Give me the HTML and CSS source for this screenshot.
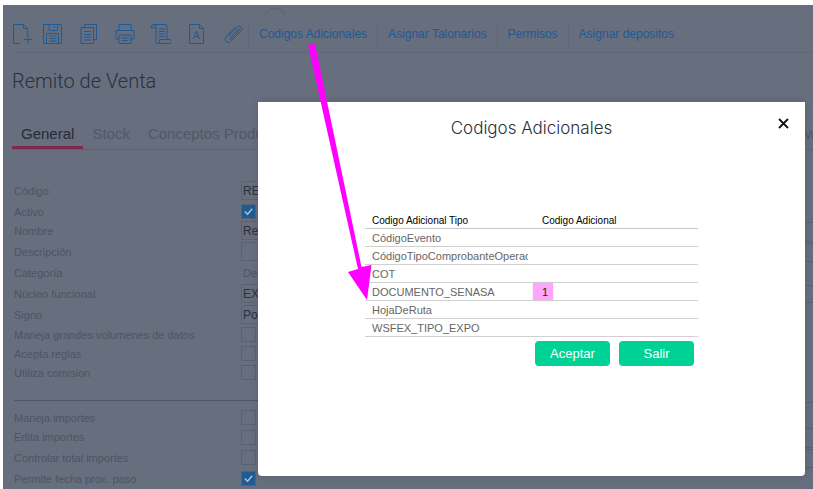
FILE: index.html
```html
<!DOCTYPE html>
<html lang="es">
<head>
<meta charset="utf-8">
<title>Remito de Venta</title>
<link rel="stylesheet" href="styles.css">
</head>
<body>
<div class="app">
  <span class="arc"></span>
  <header class="toolbar">
    <div class="tools">
      <svg class="ico ico-first" viewBox="0 0 20 20"><path d="M7.500 19.500H.5V.5h10l4 4v7M10.500.5v4h4M11 15.500h8M15 11.500v8"/></svg>
      <svg class="ico" viewBox="0 0 20 20"><path d="M.5.500h18v19H.5zM6 .5v6h8.500v-6M11.500 2v2M3.500 19.500v-10h12v10M6 12h7.500M6 14.500h7.500M6 17h7.500"/></svg>
      <svg class="ico" viewBox="0 0 20 20"><path d="M5.500 3.500v-3h12v15h-3M2 3.500h12.500v16H2zM5 7.500h7M5 10.500h7M5 13h7M5 16h7"/></svg>
      <svg class="ico" viewBox="0 0 20 20"><path d="M4 6.500V.5h12v6M4 15H1V6.500h18V15h-3M4 11h12v8.500H4zM6.500 14h7M6.500 16.500h7"/></svg>
      <svg class="ico" viewBox="0 0 20 20"><path d="M3 .5h11a2 2 0 0 1 2 2v13.500M3 .5A2.500 2.500 0 0 0 .5 3v1H5V3A2.500 2.500 0 0 0 3 .5M5 4v13.500a2 2 0 0 0 2 2h11a2 2 0 0 0 1.500-3.500v-.5h-11v1.500a2 2 0 0 1-1.500 2.500M8 5h6M8 7.500h6M8 10h6M8 12.500h6"/></svg>
      <svg class="ico" viewBox="0 0 20 20"><path d="M2.500.5h10l4 4v15h-14zM12.500.5v4h4M6.500 15l3-8 3 8M7.500 12.500h4"/></svg>
      <svg class="ico" viewBox="0 0 20 20"><path d="M5 12.500 14 3a2.800 2.800 0 0 1 4 4L7.500 17.500a2.800 2.800 0 0 1-4.500-4.500L12 3M6.500 14.500 15.500 5a1 1 0 0 1 1 1L7 16"/></svg>
    </div>
    <nav class="links">
      <a class="link">Codigos Adicionales</a>
      <a class="link">Asignar Talonarios</a>
      <a class="link">Permisos</a>
      <a class="link">Asignar depositos</a>
    </nav>
  </header>

  <h1 class="page-title">Remito de Venta</h1>

  <div class="tabs">
    <span class="tab tab-active">General</span>
    <span class="tab">Stock</span>
    <span class="tab">Conceptos Productivos</span>
    <span class="tab tab-last">w</span>
  </div>

  <div class="body">
    <section class="form">
      <div class="row h21"><span class="lbl">Código</span><span class="input">RE</span></div>
      <div class="row h19 nudge"><span class="lbl">Activo</span><span class="check on"><svg viewBox="0 0 14 14"><path d="M3 7l3 3 5-6"/></svg></span></div>
      <div class="row h21"><span class="lbl">Nombre</span><span class="input">Re</span></div>
      <div class="row h21"><span class="lbl">Descripción</span><span class="input"></span></div>
      <div class="row h21"><span class="lbl">Categoría</span><span class="plain">Des</span></div>
      <div class="row h21"><span class="lbl">Núcleo funcional</span><span class="input">EX</span></div>
      <div class="row h21"><span class="lbl">Signo</span><span class="input">Po</span></div>
      <div class="row h19"><span class="lbl">Maneja grandes volumenes de datos</span><span class="check"></span></div>
      <div class="row h19"><span class="lbl">Acepta reglas</span><span class="check"></span></div>
      <div class="row h19"><span class="lbl">Utiliza comision</span><span class="check"></span></div>
      <hr class="rule">
      <div class="row h19"><span class="lbl">Maneja importes</span><span class="check"></span></div>
      <div class="row h20"><span class="lbl">Edita importes</span><span class="check"></span></div>
      <div class="row h21"><span class="lbl">Controlar total importes</span><span class="check"></span></div>
      <div class="row h21"><span class="lbl">Permite fecha prox. paso</span><span class="check on"><svg viewBox="0 0 14 14"><path d="M3 7l3 3 5-6"/></svg></span></div>
    </section>
    <aside class="side">
      <i></i><i></i><i></i><i></i><i></i><i></i><i></i><i></i><i></i><i></i><i></i>
    </aside>
  </div>
</div>

<div class="modal">
  <h2 class="modal-title">Codigos Adicionales</h2>
  <svg class="close" viewBox="0 0 11 11"><path d="M1 1l9 9M10 1l-9 9"/></svg>
  <div class="modal-body">
    <table class="grid">
      <thead>
        <tr><th class="c1">Codigo Adicional Tipo</th><th class="c2">Codigo Adicional</th></tr>
      </thead>
      <tbody>
        <tr><td class="c1"><div class="clip">CódigoEvento</div></td><td></td></tr>
        <tr><td class="c1"><div class="clip">CódigoTipoComprobanteOperacion</div></td><td></td></tr>
        <tr><td class="c1"><div class="clip">COT</div></td><td></td></tr>
        <tr><td class="c1"><div class="clip">DOCUMENTO_SENASA</div></td><td><span class="hl">1</span></td></tr>
        <tr><td class="c1"><div class="clip">HojaDeRuta</div></td><td></td></tr>
        <tr><td class="c1"><div class="clip">WSFEX_TIPO_EXPO</div></td><td></td></tr>
      </tbody>
    </table>
    <div class="actions">
      <button class="btn">Aceptar</button>
      <button class="btn">Salir</button>
    </div>
  </div>
</div>

<svg class="arrow" viewBox="0 0 813 489"><path d="M308 45l7-1 46.500 223 10-2L367 300 348 272l10-3z"/></svg>
</body>
</html>
```

FILE: styles.css
```css
* { box-sizing: border-box; }
html, body { height: 100%; }
body {
  margin: 0;
  padding: 5px 0 0 3px;
  background: #fff;
  overflow: hidden;
  font-family: "Liberation Sans", Arial, sans-serif;
}
.app {
  position: relative;
  height: 484px;
  background: #676e7e;
  overflow: hidden;
}
.arc {
  position: absolute;
  left: 260px;
  top: 3px;
  width: 24px;
  height: 24px;
  border-radius: 50%;
  border: 1px solid #5a6171;
  clip-path: inset(0 0 17px 0);
}
.toolbar {
  display: flex;
  align-items: flex-start;
  height: 48px;
  margin-left: 9px;
  padding-top: 18px;
  border-bottom: 1px solid #5f6676;
}
.tools {
  display: flex;
  align-items: flex-start;
  gap: 16px;
  width: 237px;
  height: 25px;
  border-right: 1px solid #5f6676;
}
.ico {
  flex: none;
  width: 20px;
  height: 20px;
  margin-top: 1px;
  fill: none;
  stroke: #1e5a96;
  stroke-width: 1;
}
.ico-first { margin-right: -6px; margin-left: .5px; }
.links { display: flex; height: 25px; }
.link {
  padding: 4px 10px 0;
  font-size: 12px;
  line-height: 14px;
  color: #1e5a96;
  border-right: 1px solid #5f6676;
}
.link:last-child { border-right: 0; }
.page-title {
  margin: 16px 0 0 9px;
  font: 300 20px/24px Roboto, sans-serif;
  color: #2b3040;
}
.tabs {
  display: flex;
  height: 34px;
  margin: 23px 0 0 9px;
  border-bottom: 1px solid #5c6373;
  overflow: hidden;
  white-space: nowrap;
}
.tab {
  padding: 8px 9px 0;
  height: 33px;
  font: 15px/20px "Liberation Sans", sans-serif;
  color: #515868;
}
.tab-active {
  color: #252a3b;
  border-bottom: 3px solid #7f2a4d;
}
.tab-last { margin-left: auto; padding: 8px 0 0; margin-right: -3px; }
.body {
  display: flex;
  padding-left: 11px;
}
.form { width: 775px; padding-top: 30px; flex: none; }
.row { display: flex; align-items: center; }
.h19 { height: 19px; }
.h20 { height: 20px; }
.h21 { height: 21px; }
.nudge { padding-top: 2px; }
.lbl {
  width: 227px;
  flex: none;
  font-size: 11px;
  color: #4e5464;
}
.input {
  display: flex;
  align-items: center;
  height: 19px;
  width: 200px;
  padding-left: 1px;
  border: 1px solid #5a6171;
  font-size: 12px;
  color: #2b3040;
}
.plain { padding-left: 2px; font-size: 11px; color: #4e5464; }
.check {
  width: 15px;
  height: 15px;
  border: 1px solid #5a6171;
}
.check svg { display: block; width: 13px; height: 13px; fill: none; stroke: #b5c2d2; stroke-width: 1.500; }
.on { background: #1f5c94; }
.rule {
  margin: 18px 0 7px;
  border: 0;
  border-top: 1px solid #50576a;
  width: 500px;
}
.side {
  flex: 1;
  margin-left: -10px;
  display: grid;
  grid-template-rows: 73px 19px 2px 18px 24px 17px 100px 26px 19px 2px 18px;
}
.side i { display: block; border-bottom: 1px solid #5a6171; }

.modal {
  position: absolute;
  left: 258px;
  top: 102px;
  width: 547px;
  height: 374px;
  background: #fff;
  border-radius: 0 0 4px 4px;
  box-shadow: 0 0 10px rgba(0, 0, 0, .12);
}
.modal-title {
  margin: 0;
  padding-top: 15px;
  text-align: center;
  font: 300 17px/23px Inter, sans-serif;
  color: #2b2f3c;
}
.close {
  position: absolute;
  left: 520px;
  top: 16px;
  width: 11px;
  height: 11px;
  fill: none;
  stroke: #111;
  stroke-width: 1.800;
}
.modal-body { margin: 72px 0 0 107px; width: 333px; }
.grid {
  width: 333px;
  border-collapse: collapse;
  table-layout: fixed;
  font-size: 11px;
}
.grid th {
  height: 16px;
  padding: 2px 0 0;
  text-align: left;
  font-size: 10px;
  font-weight: 400;
  color: #000;
  border-bottom: 1px solid #c8c8c8;
}
.grid td {
  height: 18px;
  padding: 1px 0 0;
  color: #666;
  border-bottom: 1px solid #d0d0d0;
}
.c1 { width: 170px; padding-left: 7px !important; }
.c2 { padding-left: 7px !important; }
.clip { width: 156px; overflow: hidden; white-space: nowrap; }
.hl {
  display: block;
  width: 20px;
  height: 19px;
  margin: -2px 0 -1px -2px;
  padding: 4px 0 0 9px;
  background: #ffa6fa;
  box-shadow: 0 0 1px #ffa6fa;
  color: #222;
}
.actions {
  display: flex;
  justify-content: flex-end;
  gap: 9px;
  margin-top: 4px;
  padding-right: 4px;
}
.btn {
  width: 75px;
  height: 25px;
  border: 0;
  border-radius: 4px;
  background: #00d295;
  color: #fff;
  font: 13px "Liberation Sans", sans-serif;
}
.arrow {
  position: absolute;
  left: 0;
  top: 0;
  width: 813px;
  height: 489px;
  pointer-events: none;
  fill: #ff00ff;
}
```
